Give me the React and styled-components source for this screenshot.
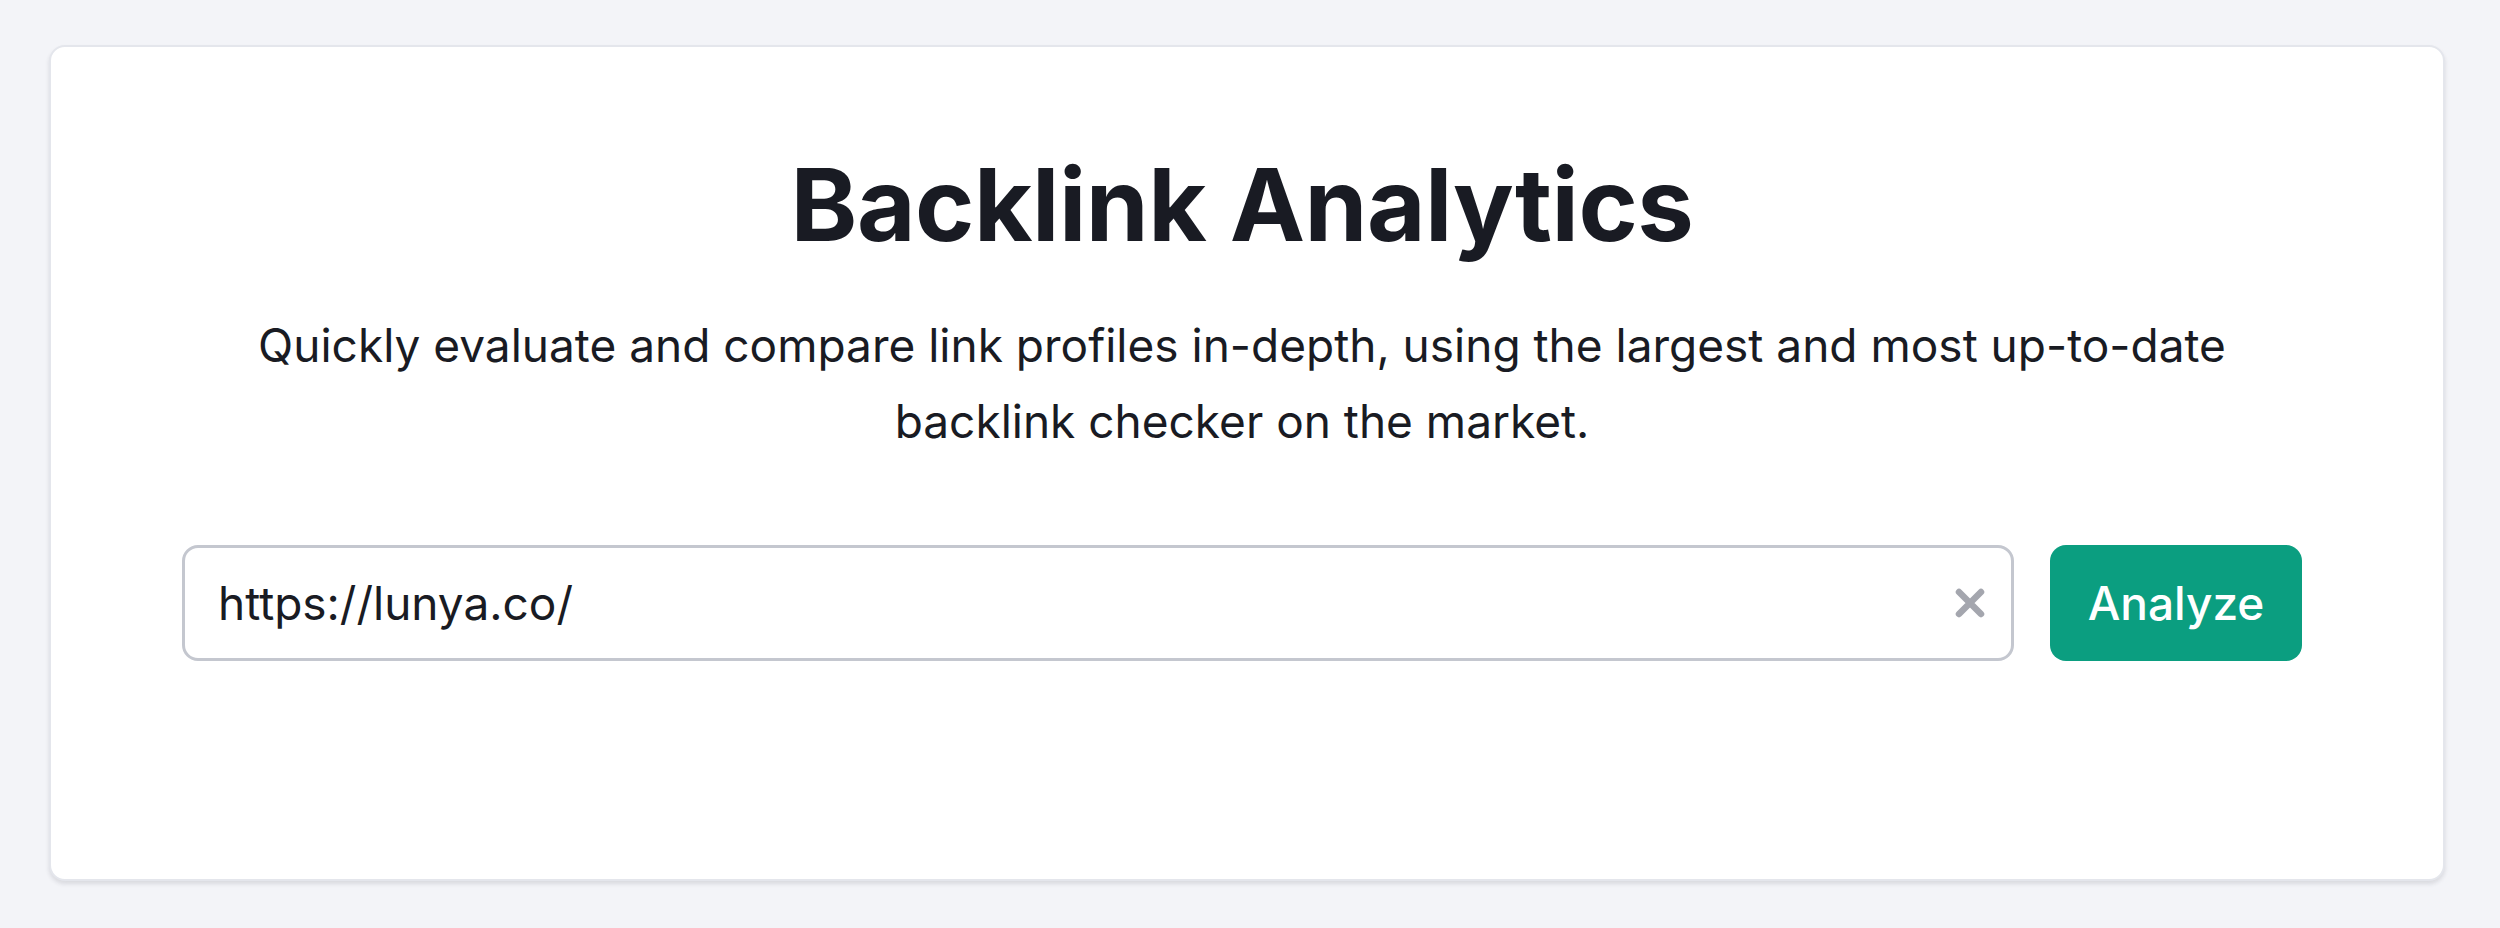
import React from 'react';
import styled, { createGlobalStyle } from 'styled-components';

const GlobalStyle = createGlobalStyle`
    html, body {
        margin: 0;
        padding: 0;
        background: #f3f4f8;
    }

    body {
        font-family: 'Inter', 'Noto Sans', sans-serif;
        color: #191b23;
    }
`;

const ClearIcon = () => (
    <svg width="30" height="30" viewBox="0 0 30 30" fill="none">
        <path d="M4 4L26 26M26 4L4 26" stroke="#a4a6ae" strokeWidth="6.5" strokeLinecap="round" />
    </svg>
);

const App = () => {
    return (
        <>
            <GlobalStyle />
            <Page>
                <Card>
                    <Title>Backlink Analytics</Title>
                    <Subtitle>
                        Quickly evaluate and compare link profiles in-depth, using the largest and most up-to-date
                        <br />
                        backlink checker on the market.
                    </Subtitle>
                    <SearchRow>
                        <InputBox>
                            <UrlInput type="text" defaultValue="https://lunya.co/" />
                            <ClearButton type="button" aria-label="Clear">
                                <ClearIcon />
                            </ClearButton>
                        </InputBox>
                        <AnalyzeButton type="button">Analyze</AnalyzeButton>
                    </SearchRow>
                </Card>
            </Page>
        </>
    );
};

export default App;

const Page = styled.div`
    min-height: 928px;
    box-sizing: border-box;
    padding: 45px 55px 46px 49px;
`;

const Card = styled.div`
    display: flex;
    flex-direction: column;
    align-items: center;
    box-sizing: border-box;
    height: 836px;
    background: #fff;
    border: 2px solid #e4e6ec;
    border-radius: 16px;
    box-shadow: 0 3px 4px rgba(30, 32, 50, 0.12);
    padding: 94px 141px 0 131px;
`;

const Title = styled.h1`
    margin: 0;
    font-family: 'Inter', sans-serif;
    font-weight: 700;
    font-size: 101px;
    line-height: 126px;
    letter-spacing: -0.5px;
    color: #191b23;
`;

const Subtitle = styled.p`
    margin: 40px 0 0;
    font-size: 46px;
    line-height: 76px;
    font-weight: 400;
    text-align: center;
    color: #191b23;
`;

const SearchRow = styled.div`
    display: flex;
    align-items: center;
    gap: 36px;
    width: 100%;
    margin-top: 86px;
`;

const InputBox = styled.div`
    flex: 1;
    display: flex;
    align-items: center;
    box-sizing: border-box;
    height: 116px;
    border: 3px solid #c4c7cf;
    border-radius: 16px;
    padding: 0 17px 0 33px;
`;

const UrlInput = styled.input`
    flex: 1;
    min-width: 0;
    border: none;
    outline: none;
    background: transparent;
    padding: 0;
    font-family: 'Inter', sans-serif;
    font-size: 46px;
    color: #191b23;
`;

const ClearButton = styled.button`
    display: flex;
    align-items: center;
    justify-content: center;
    width: 48px;
    height: 48px;
    padding: 0;
    border: none;
    background: none;
    cursor: pointer;
`;

const AnalyzeButton = styled.button`
    box-sizing: border-box;
    width: 252px;
    height: 116px;
    border: none;
    border-radius: 16px;
    background: #0b9e80;
    color: #fff;
    font-family: 'Inter', sans-serif;
    font-weight: 500;
    font-size: 46px;
    cursor: pointer;
`;
